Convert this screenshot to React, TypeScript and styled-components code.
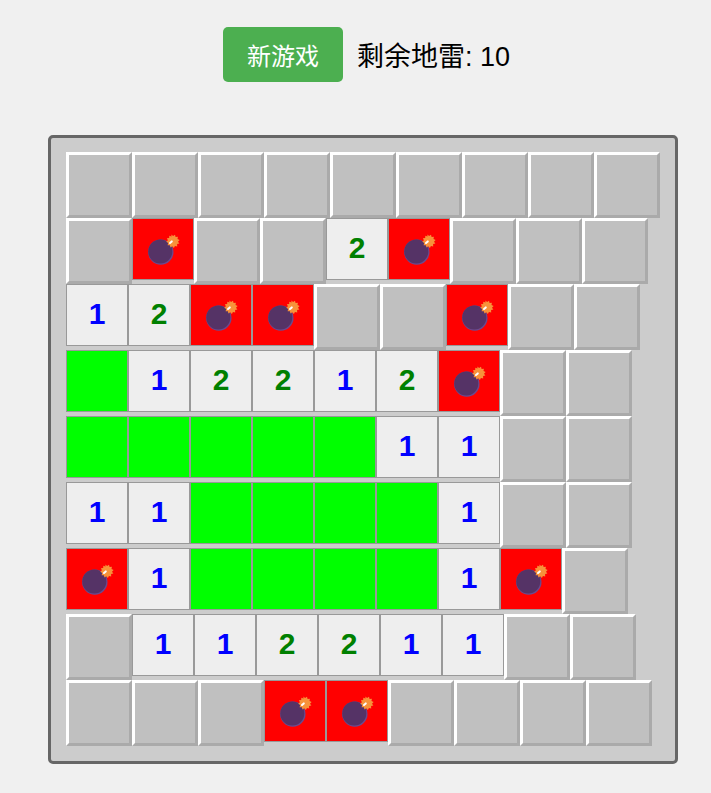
import { FC } from "react";
import styled, { createGlobalStyle, css } from "styled-components";

const GlobalStyle = createGlobalStyle`
  body {
    margin: 0;
    background: #f0f0f0;
    font-family: "Liberation Sans", "Noto Sans CJK SC", sans-serif;
  }
`;

type CellKind = "hidden" | "bomb" | "empty" | "number";

const Page = styled.div`
  width: 711px;
  height: 793px;
  overflow: hidden;
`;

const Controls = styled.div`
  display: flex;
  align-items: center;
  height: 55px;
  padding: 27px 0 0 223px;
`;

const NewGameButton = styled.button`
  width: 120px;
  height: 55px;
  padding: 0;
  border: none;
  border-radius: 5px;
  background: #4caf50;
  color: #fff;
  font: inherit;
  font-size: 24px;
`;

const MineCount = styled.span`
  margin-left: 14px;
  color: #000;
  font-size: 27px;
`;

const Board = styled.div`
  box-sizing: border-box;
  width: 630px;
  height: 629px;
  margin: 53px 0 0 48px;
  padding: 14px 15px 15px;
  border: 3px solid #666;
  border-radius: 5px;
  background: #ccc;
`;

const Row = styled.div`
  display: flex;
  align-items: flex-start;
  height: 66px;
`;

const revealed = css`
  border: 1px solid #999;
`;

const kindStyles = {
  hidden: css`
    border: 3px solid;
    border-color: #fff #aaa #aaa #fff;
    background: #c0c0c0;
  `,
  bomb: css`
    ${revealed}
    background: #f00;
  `,
  empty: css`
    ${revealed}
    background: #0f0;
  `,
  number: css`
    ${revealed}
    background: #eee;
  `,
};

const Cell = styled.div<{ $kind: CellKind; $value?: number }>`
  flex: none;
  display: flex;
  align-items: center;
  justify-content: center;
  width: 60px;
  height: 60px;
  font-size: 30px;
  font-weight: bold;
  color: ${(props) => (props.$value === 2 ? "#008000" : "#0000ff")};
  ${(props) => kindStyles[props.$kind]}
`;

const Digit = styled.span`
  margin-bottom: 2px;
`;

const BombIcon = styled.svg`
  display: block;
  width: 40px;
  height: 40px;
`;

const Bomb: FC = () => (
  <BombIcon viewBox="0 0 40 40">
    <circle cx="17.8" cy="23.1" r="12.7" fill="#6a4a90" />
    <circle cx="17.3" cy="22.6" r="12" fill="#553366" />
    <path d="M25 15l3-3" stroke="#553366" strokeWidth="2.4" />
    <path
      d="M28.4 5.4l1.7 1.7 1.9-1.3.6 2.3 2.3-.3-.4 2.3 2.1.9-1.6 1.7 1.4 1.8-2.3.6.1 2.3-2.3-.5-1 2-1.7-1.6-1.8 1.3-.5-2.3-2.3-.1.6-2.3-2-1.1 1.7-1.5-1-2 2.3-.2.1-2.3 2.2.7z"
      fill="#f7923a"
    />
    <path d="M27 14l1.8-1.6" stroke="#fff" strokeWidth="2" strokeLinecap="round" />
  </BombIcon>
);

const LAYOUT = [
  "#########",
  "#*##2*###",
  "12**##*##",
  ".12212*##",
  ".....11##",
  "11....1##",
  "*1....1*#",
  "#112211##",
  "###**####",
];

const kindOf = (ch: string): CellKind => {
  if (ch === "#") return "hidden";
  if (ch === "*") return "bomb";
  if (ch === ".") return "empty";
  return "number";
};

const App: FC = () => (
  <Page>
    <GlobalStyle />
    <Controls>
      <NewGameButton>新游戏</NewGameButton>
      <MineCount>剩余地雷: 10</MineCount>
    </Controls>
    <Board>
      {LAYOUT.map((row, y) => (
        <Row key={y}>
          {row.split("").map((ch, x) => {
            const kind = kindOf(ch);
            return (
              <Cell key={x} $kind={kind} $value={kind === "number" ? Number(ch) : undefined}>
                {kind === "bomb" && <Bomb />}
                {kind === "number" && <Digit>{ch}</Digit>}
              </Cell>
            );
          })}
        </Row>
      ))}
    </Board>
  </Page>
);

export default App;
